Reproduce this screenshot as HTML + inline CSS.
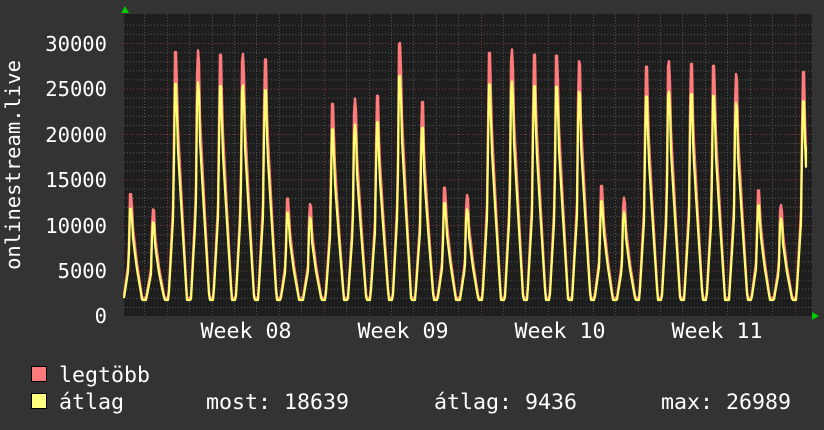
<!DOCTYPE html>
<html><head><meta charset="utf-8"><style>
html,body{margin:0;padding:0;background:#333;width:824px;height:430px;overflow:hidden}
svg{display:block}
text{font-family:"DejaVu Sans Mono","Liberation Mono",monospace;font-size:20.5px;fill:#fff}
.lg{font-size:21.6px}
</style></head><body>
<svg id="g" width="824" height="430" xmlns="http://www.w3.org/2000/svg">
<rect width="824" height="430" fill="#333"/>
<rect x="124" y="14" width="688" height="302" fill="#1e1e1e"/>
<g id="grid"></g>
<polyline id="red" fill="none" stroke="#ff7b7b" stroke-width="2.4" stroke-linejoin="round"/>
<polyline id="yel" fill="none" stroke="#ffff70" stroke-width="2.2" stroke-linejoin="round"/>
<polygon points="121,13 125,6 129,13" fill="#00cc00"/>
<polygon points="812,312 819,316 812,320" fill="#00cc00"/>
<g text-anchor="end">
<text x="107" y="51">30000</text>
<text x="107" y="96">25000</text>
<text x="107" y="142">20000</text>
<text x="107" y="187">15000</text>
<text x="107" y="233">10000</text>
<text x="107" y="278">5000</text>
<text x="107" y="323">0</text>
</g>
<text transform="translate(20,165) rotate(-90)" text-anchor="middle">onlinestream.live</text>
<g text-anchor="middle" class="lg">
<text class="lg" x="246" y="338">Week 08</text>
<text class="lg" x="403" y="338">Week 09</text>
<text class="lg" x="560" y="338">Week 10</text>
<text class="lg" x="717" y="338">Week 11</text>
</g>
<rect x="31.5" y="366.5" width="15" height="15" fill="#ff7b7b" stroke="#000"/>
<rect x="31.5" y="393.5" width="15" height="15" fill="#ffff80" stroke="#000"/>
<text class="lg" x="59" y="382">legtöbb</text>
<text class="lg" x="59" y="409">átlag</text>
<text class="lg" x="206" y="409">most: 18639</text>
<text class="lg" x="434" y="409">átlag: 9436</text>
<text class="lg" x="661" y="409">max: 26989</text>
</svg>
<script>
var ns="http://www.w3.org/2000/svg",G=document.getElementById('grid');
function ln(x1,y1,x2,y2,c){var l=document.createElementNS(ns,'line');l.setAttribute('x1',x1);l.setAttribute('y1',y1);l.setAttribute('x2',x2);l.setAttribute('y2',y2);l.setAttribute('stroke',c);l.setAttribute('stroke-dasharray','1,2');G.appendChild(l);}
function Y(v){return 316-v*0.0091;}
for(var k=1;k<=32;k++){var y=Y(k*1000);if(y<14)break;ln(124,y+.5,812,y+.5,k%5==0?'#7a3a3a':'#555');}
for(var d=1;d<31;d++){var x=121.9+d*22.42;if(x>812)break;var major=[166.7,323.6,480.6,637.5,794.4].some(function(m){return Math.abs(m-x)<2});ln(Math.round(x)+.5,14,Math.round(x)+.5,316,major?'#7a3a3a':'#555');}
var peaks=[13400,11700,29000,29200,28700,28800,28200,12900,12300,23300,23900,24200,30000,23500,14100,13300,28900,29300,28700,28600,28000,14300,13000,27400,28000,27700,27500,26600,13800,12200,26800];
function f(t,P){var m=2000;
 if(t<0.08)return m;
 if(t<0.3)return m+(0.45*P-m)*(t-0.08)/0.22;
 if(t<0.36)return 0.45*P+0.55*P*(t-0.3)/0.06;
 if(t<0.43)return P;
 if(t<0.48)return P-(0.25*P)*(t-0.43)/0.05;
 if(t<0.66)return 0.75*P-(0.3*P)*(t-0.48)/0.18;
 if(t<0.9)return 0.45*P-(0.45*P-m)*(t-0.66)/0.24;
 return m;}
var r=[],yl=[];
for(var x=124;x<=806;x+=1){var dd=(x-121.9)/22.42,i=Math.floor(dd),t=dd-i;var P=peaks[Math.min(i,peaks.length-1)];
 var v=f(t,P);r.push(x+','+Y(v).toFixed(1));yl.push(x+','+Y(v*0.88).toFixed(1));}
r.push('806,'+Y(18600));yl.push('806,'+Y(18639));
document.getElementById('red').setAttribute('points',r.join(' '));
document.getElementById('yel').setAttribute('points',yl.join(' '));
</script>
</body></html>
